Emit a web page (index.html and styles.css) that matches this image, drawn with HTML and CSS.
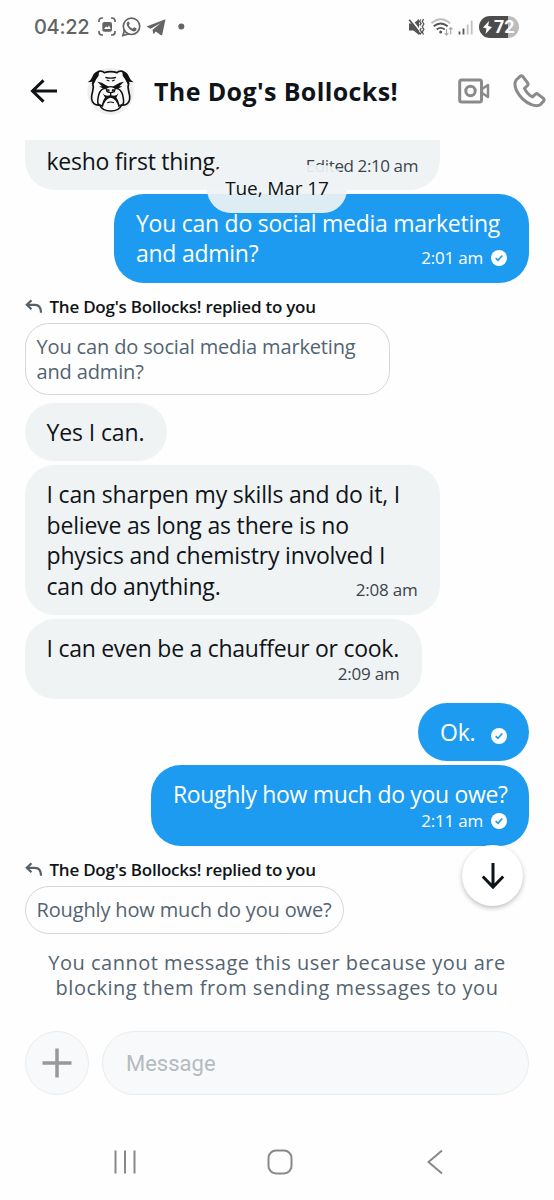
FILE: index.html
```
<!DOCTYPE html>
<html lang="en">
<head>
<meta charset="utf-8">
<title>The Dog's Bollocks!</title>
<link rel="stylesheet" href="styles.css">
</head>
<body>
<div class="screen">
  <div class="status">
    <span class="clock">04:22</span>
    <svg class="status-left" width="90" height="22" viewBox="0 0 90 22">
      <g fill="none" stroke="#646464" stroke-width="1.7">
        <path d="M2 6V5q0-3 3-3h1M14 2h1q3 0 3 3v1M18 15v1q0 3-3 3h-1M6 19H5q-3 0-3-3v-1"/>
        <circle cx="34.500" cy="10.300" r="8.200"/>
        <path d="M27.500 14l-1.600 5.500 5.600-1.500"/>
      </g>
      <rect x="5.300" y="6" width="9.700" height="9.700" rx="2" fill="#646464"/>
      <path d="M7 13l2-2.500 1.500 1 1.500-2 1.800 3.500z" fill="#fff"/>
      <path d="M31 5.500q-2 1-1.200 3.500 2 4.800 6.200 6.300 2.500.7 3.500-1.500.4-1.300-.5-1.700l-2-.9-1.500 1.600q-2.500-1-3.700-3.600l1-1.400-.9-2.100z" fill="#646464"/>
      <path d="M49.500 10.500L68.500 3.200 65.300 18.500q-.6 1.300-1.800.5l-4.600-3.600-2.400 2.800-1-4.500 8.300-6.600-10.100 5.700z" fill="#646464"/>
      <circle cx="84.300" cy="10.500" r="3" fill="#646464"/>
    </svg>
    <svg class="status-right" width="66" height="22" viewBox="0 0 66 22">
      <path d="M1 7.500h4.500L11 3v16l-5.500-4.500H1z" fill="#555"/>
      <path d="M2.500 2.500L13 16" stroke="#fff" stroke-width="1.700"/>
      <path d="M1.300 3.800L12 18" stroke="#555" stroke-width="1.700"/>
      <path d="M12.800 3.500l-1.200 2 1.500 2-1.500 2M13.200 12l-1 2 1.300 2-1.300 2.500M15.500 3l-1.200 2.500 1.500 2.500-1.500 2.700 1.500 2.700-1.500 2.600 1.200 2.500" fill="none" stroke="#555" stroke-width="1.300"/>
      <path d="M23.500 7.300q9-8 18.500 0" fill="none" stroke="#bdbdbd" stroke-width="1.900"/>
      <path d="M25.700 10.300q7-5.500 14 0M28.700 13.400q4-3 8 0" fill="none" stroke="#555" stroke-width="1.900"/>
      <circle cx="32.700" cy="16" r="1.500" fill="#555"/>
      <path d="M38.500 13v6M36.700 17.200l1.800 1.900 1.800-1.900M42.700 18.500v-7M40.900 13.400l1.800-1.900 1.800 1.900" fill="none" stroke="#aaa" stroke-width="1.200"/>
      <path d="M51.500 15.500v3M55.500 12.500v6" stroke="#555" stroke-width="1.800"/>
      <path d="M59.700 8.500v10M63.700 4.500v14" stroke="#c0c0c0" stroke-width="1.800"/>
    </svg>
    <div class="battery">
      <svg width="9" height="13" viewBox="0 0 9 13"><path d="M6 0L0 6.500l3.500 1L2.500 13 9 6 5.200 5z" fill="#fff"/></svg>
      <span>72</span>
    </div>
  </div>

  <div class="header">
    <svg class="back" width="28" height="26" viewBox="0 0 28 26"><path d="M27 13H3M13.500 2.300L2.500 13l11 10.700" fill="none" stroke="#0f1419" stroke-width="3"/></svg>
    <svg class="avatar" width="60" height="60" viewBox="0 0 180 180">
      <circle cx="92" cy="91" r="70" fill="#efefef"/>
      <path d="M56 31q12-2 17 4 19-6 38 0 5-6 17-4l18 36q-4 10 0 24 8 28-4 37-6 5-17 4-8 18-33 18t-33-18q-11 1-17-4-12-9-4-37 4-14 0-24z" fill="#f9f9f9" stroke="#111" stroke-width="5" stroke-linejoin="round"/>
      <path d="M56 29q-15 4-19 18-4 11-14 17l15-2 2 9 9-17 7-10zM128 29q15 4 19 18 4 11 14 17l-15-2-2 9-9-17-7-10z" fill="#111"/>
      <path d="M76 49q16 5 32 0M80 57l8 3M104 57l-8 3" fill="none" stroke="#111" stroke-width="3.500"/>
      <path d="M52 62l13 3 23 13-4 6q-17 1-27-8l9 0zM132 62l-13 3-23 13 4 6q17 1 27-8l-9 0z" fill="#111"/>
      <path d="M78 82q6-5 14-5t14 5l-3 10q-11 6-22 0z" fill="#f9f9f9" stroke="#111" stroke-width="4"/>
      <path d="M80 85h8l1 6-5 1zM104 85h-8l-1 6 5 1z" fill="#111"/>
      <path d="M76 82q-15 2-20 20-5 20-1 31M108 82q15 2 20 20 5 20 1 31" fill="none" stroke="#111" stroke-width="4.500"/>
      <path d="M90 94h4v9q14 2 20 15l5 14q8-2 10-8-1 11-14 14-5-24-23-28-18 4-23 28-13-3-14-14 2 6 10 8l5-14q6-13 20-15z" fill="#111"/>
      <path d="M68 96q6 10 17 8l-9 8zM116 96q-6 10-17 8l9 8z" fill="#111"/>
      <path d="M82 125q10-4 20 0" fill="none" stroke="#111" stroke-width="3.500"/>
    </svg>
    <h1>The Dog's Bollocks!</h1>
    <svg class="camera" width="32" height="26" viewBox="0 0 32 26"><g fill="none" stroke="#8a8a8a" stroke-width="3" stroke-linejoin="round"><rect x="1.700" y="2" width="21.800" height="22" rx="2"/><circle cx="12.500" cy="13" r="4.700"/><path d="M24 11l6-4v12l-6-4z" stroke-width="2.500"/></g></svg>
    <svg class="phone" width="34" height="34" viewBox="0 0 34 34"><path d="M10.500 2.200q-1-.9-2.200 0L4.200 6Q1.500 10 4.500 16.500q5 10 15 14.200 6 2.200 9.200-.4l3-3.300q1-1.500-.3-2.600l-5.500-4.300q-1.200-.9-2.400 0l-3 2.800q-5.500-2.500-8-8.600l3-2.800q1-1.200.2-2.500z" fill="none" stroke="#8a8a8a" stroke-width="3" stroke-linejoin="round"/></svg>
  </div>

  <div class="chat">
    <div class="bubble in clipped"><p>kesho first thing.</p><span class="time">Edited 2:10 am</span></div>
    <div class="date">Tue, Mar 17</div>
    <div class="bubble out b-marketing"><p>You can do social media marketing<br>and admin?</p><span class="time">2:01 am<svg class="tick" width="16" height="16" viewBox="0 0 16 16"><circle cx="8" cy="8" r="8" fill="#fff"/><path d="M4.700 8.200L7 10.400 11.300 5.500" fill="none" stroke="#1d9bf0" stroke-width="1.600"/></svg></span></div>

    <div class="replied"><svg width="18" height="15" viewBox="0 0 18 15"><path d="M6.500 1.300L1.800 5.800l4.700 4.500M2 5.800h8q6 0 6 8" fill="none" stroke="#57616a" stroke-width="2.200"/></svg><span>The Dog's Bollocks! replied to you</span></div>
    <div class="quote q1">You can do social media marketing<br>and admin?</div>

    <div class="bubble in b-yes"><p>Yes I can.</p></div>
    <div class="bubble in b-skills"><p>I can sharpen my skills and do it, I<br>believe as long as there is no<br>physics and chemistry involved I<br>can do anything.</p><span class="time">2:08 am</span></div>
    <div class="bubble in b-cook"><p>I can even be a chauffeur or cook.</p><span class="time">2:09 am</span></div>
    <div class="bubble out b-ok"><p>Ok.</p><span class="time"><svg class="tick" width="16" height="16" viewBox="0 0 16 16"><circle cx="8" cy="8" r="8" fill="#fff"/><path d="M4.700 8.200L7 10.400 11.300 5.500" fill="none" stroke="#1d9bf0" stroke-width="1.600"/></svg></span></div>
    <div class="bubble out b-owe"><p>Roughly how much do you owe?</p><span class="time">2:11 am<svg class="tick" width="16" height="16" viewBox="0 0 16 16"><circle cx="8" cy="8" r="8" fill="#fff"/><path d="M4.700 8.200L7 10.400 11.300 5.500" fill="none" stroke="#1d9bf0" stroke-width="1.600"/></svg></span></div>

    <div class="replied"><svg width="18" height="15" viewBox="0 0 18 15"><path d="M6.500 1.300L1.800 5.800l4.700 4.500M2 5.800h8q6 0 6 8" fill="none" stroke="#57616a" stroke-width="2.200"/></svg><span>The Dog's Bollocks! replied to you</span></div>
    <div class="quote q2">Roughly how much do you owe?</div>
    <div class="jump"><svg width="24" height="28" viewBox="0 0 24 28"><path d="M12 1v24M1.800 14.500L12 25l10.200-10.500" fill="none" stroke="#0f1419" stroke-width="3"/></svg></div>
  </div>

  <p class="notice">You cannot message this user because you are<br>blocking them from sending messages to you</p>

  <div class="composer">
    <div class="plus"><svg width="30" height="30" viewBox="0 0 30 30"><path d="M15 .5v29M.5 15h29" stroke="#999" stroke-width="3.500"/></svg></div>
    <div class="field">Message</div>
  </div>

  <div class="nav">
    <svg width="24" height="26" viewBox="0 0 24 26"><path d="M2.500 1.500v23M12 1.500v23M21.500 1.500v23" stroke="#888" stroke-width="2"/></svg>
    <svg class="home" width="26" height="26" viewBox="0 0 26 26"><rect x="1.500" y="1.500" width="23" height="23" rx="7.500" fill="none" stroke="#888" stroke-width="2"/></svg>
    <svg class="prev" width="16" height="26" viewBox="0 0 16 26"><path d="M15 1.500L1.500 13 15 24.500" fill="none" stroke="#888" stroke-width="2"/></svg>
  </div>
</div>
</body>
</html>
```

FILE: styles.css
```
* { box-sizing: border-box; }
body { margin: 0; background: #fefefe; color: #0f1419; font-family: "Open Sans", "Noto Sans", sans-serif; }
p, h1 { margin: 0; }
svg { display: block; flex: none; }
.screen { width: 554px; height: 1200px; overflow: hidden; display: flex; flex-direction: column; }

.status { height: 54px; display: flex; align-items: center; padding: 0 35px 0 34px; flex: none; }
.clock { font: 500 20px/30px Inter, sans-serif; color: #646464; width: 62px; letter-spacing: -.3px; }
.status-left { margin-left: 1px; }
.status-right { margin-left: auto; }
.battery { width: 40px; height: 22px; border-radius: 11px; margin-left: 5px; background: linear-gradient(90deg, #4c4c4c 72%, #bcbcbc 72%); display: flex; align-items: center; padding-left: 4px; gap: 2px; color: #fff; font: 700 18px/22px Roboto, sans-serif; }

.header { height: 86px; display: flex; align-items: center; padding: 0 8px 12px 30px; flex: none; }
.avatar { margin-left: 22px; }
h1 { font-size: 25px; line-height: 34px; font-weight: 700; margin-left: 14px; letter-spacing: .38px; white-space: nowrap; }
.camera { margin-left: auto; }
.phone { margin-left: 22px; }

.chat { position: relative; height: 800px; overflow: hidden; flex: none; display: flex; flex-direction: column; align-items: flex-start; padding: 0 25px 0 24.500px; }
.bubble { display: grid; flex: none; grid-template-columns: 100%; border-radius: 30px; padding: 14px 22px 13px; font-size: 23px; line-height: 30.700px; letter-spacing: -.26px; white-space: nowrap; margin-bottom: 4px; }
.bubble > * { grid-area: 1 / 1; }
.in { background: #eff3f4; }
.out { background: #1d9bf0; color: #fff; align-self: flex-end; }
.time { align-self: end; justify-self: end; display: flex; align-items: center; gap: 8px; font-size: 17px; line-height: 20px; letter-spacing: -.2px; margin-bottom: 2px; }
.in .time { color: #3b444c; }
.clipped { width: 415.500px; height: 50px; border-radius: 0 0 30px 30px; padding: 6px 22px 12.500px; margin-bottom: 3.500px; }
.clipped .time { letter-spacing: -.4px; }
.date { position: absolute; left: 207px; top: 25px; width: 140px; height: 48px; border-radius: 24px; background: rgba(239, 243, 244, .92); text-align: center; font-size: 19px; line-height: 47px; letter-spacing: -.1px; z-index: 1; }
.b-marketing { width: 415px; height: 89px; }
.b-yes { width: 142px; height: 58px; margin-top: 8px; letter-spacing: -.12px; }
.b-skills { width: 415px; height: 150px; letter-spacing: -.18px; }
.b-cook { width: 397px; height: 80px; }
.b-ok { width: 111px; height: 58px; }
.b-ok .time { margin-bottom: 4px; }
.b-owe { width: 378px; height: 80.500px; letter-spacing: -.34px; }
.replied { display: flex; align-items: center; gap: 7px; height: 24px; margin: 7.500px 0 5px; font-size: 17px; font-weight: 600; letter-spacing: -.24px; white-space: nowrap; flex: none; }
.quote { border: 1.500px solid #cfd9de; border-radius: 24px; padding: 11px 11px; color: #536471; font-size: 20px; line-height: 24.500px; letter-spacing: -.15px; white-space: nowrap; flex: none; }
.q1 { width: 365px; height: 72px; }
.q2 { width: 319px; height: 48px; }
.jump { position: absolute; left: 462px; top: 705px; width: 61px; height: 61px; border-radius: 50%; background: #fff; box-shadow: 0 2px 5px rgba(0, 0, 0, .25); display: flex; align-items: center; justify-content: center; }

.notice { margin-top: 11px; text-align: center; color: #536471; font-size: 20px; line-height: 24.500px; letter-spacing: .5px; white-space: nowrap; }
.composer { display: flex; gap: 13px; padding: 0 25px; margin-top: 31px; height: 64px; flex: none; }
.plus { width: 64px; border: 1.500px solid #e9edef; border-radius: 50%; background: #f7f9fa; display: flex; align-items: center; justify-content: center; }
.field { flex: 1; border: 1.500px solid #e9edef; border-radius: 32px; background: #f7f9fa; padding-left: 23px; color: #b4bbc1; font: 22px/63px Roboto, sans-serif; }
.nav { display: flex; align-items: center; height: 26px; margin-top: 54px; padding-left: 113px; flex: none; }
.home { margin-left: 130px; }
.prev { margin-left: 134px; }
```
